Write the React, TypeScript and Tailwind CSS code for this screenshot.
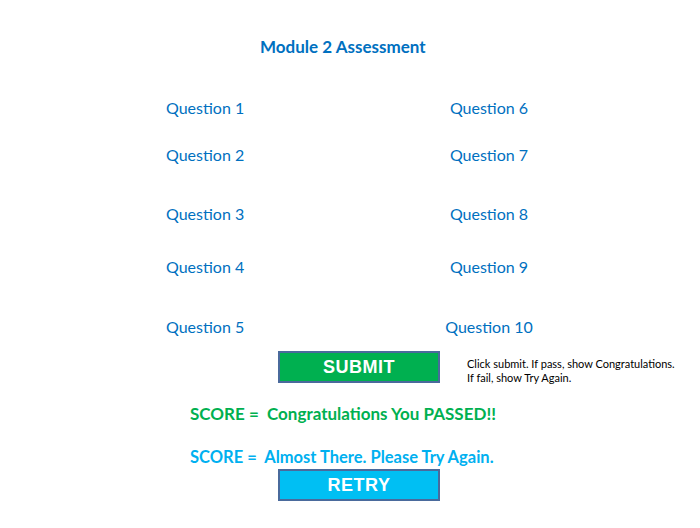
import React from "react";

const q = "text-[#0070c0] text-[16px] leading-[20px]";

export default function App() {
  const rows: [string, string, string][] = [
    ["Question 1", "Question 6", "mt-[41px]"],
    ["Question 2", "Question 7", "mt-[27px]"],
    ["Question 3", "Question 8", "mt-[39px]"],
    ["Question 4", "Question 9", "mt-[33px]"],
    ["Question 5", "Question 10", "mt-[40px]"],
  ];
  return (
    <div
      className="w-[700px] h-[528px] bg-white flex flex-col"
      style={{ fontFamily: "Lato, 'Open Sans', sans-serif" }}
    >
      <div className="mt-[37px] ml-[260px] h-[20px] leading-[20px] text-[17px] font-bold text-[#0070c0] whitespace-nowrap">
        Module 2 Assessment
      </div>
      {rows.map(([a, b, m]) => (
        <div key={a} className={`flex ${m}`}>
          <div className={`ml-[166px] w-[273px] ${q}`}>{a}</div>
          <div className={`w-[100px] text-center ${q}`}>{b}</div>
        </div>
      ))}
      <div className="flex mt-[14px] items-start">
        <div className="ml-[278px] w-[162px] h-[32px] bg-[#00b050] border-2 border-[#4a6a9c] flex items-center justify-center text-white font-bold text-[18px] tracking-[0.5px]" style={{ fontFamily: "'Liberation Sans', Arial, sans-serif" }}>
          SUBMIT
        </div>
        <div className="ml-[27px] mt-[6px] text-[11px] leading-[14px] text-black">
          <div>Click submit. If pass, show Congratulations.</div>
          <div>If fail, show Try Again.</div>
        </div>
      </div>
      <div className="mt-[19px] ml-[190px] h-[20px] leading-[20px] text-[17px] font-bold text-[#00b050] whitespace-pre">
        {"SCORE =  Congratulations You PASSED!!"}
      </div>
      <div className="mt-[23px] ml-[190px] h-[20px] leading-[20px] text-[16.5px] font-bold text-[#00b0f0] whitespace-pre">
        {"SCORE =  Almost There. Please Try Again."}
      </div>
      <div className="mt-[2px] ml-[278px] w-[162px] h-[32px] bg-[#00bff3] border-2 border-[#4a6a9c] flex items-center justify-center text-white font-bold text-[18px] tracking-[0.5px]" style={{ fontFamily: "'Liberation Sans', Arial, sans-serif" }}>
        RETRY
      </div>
    </div>
  );
}
